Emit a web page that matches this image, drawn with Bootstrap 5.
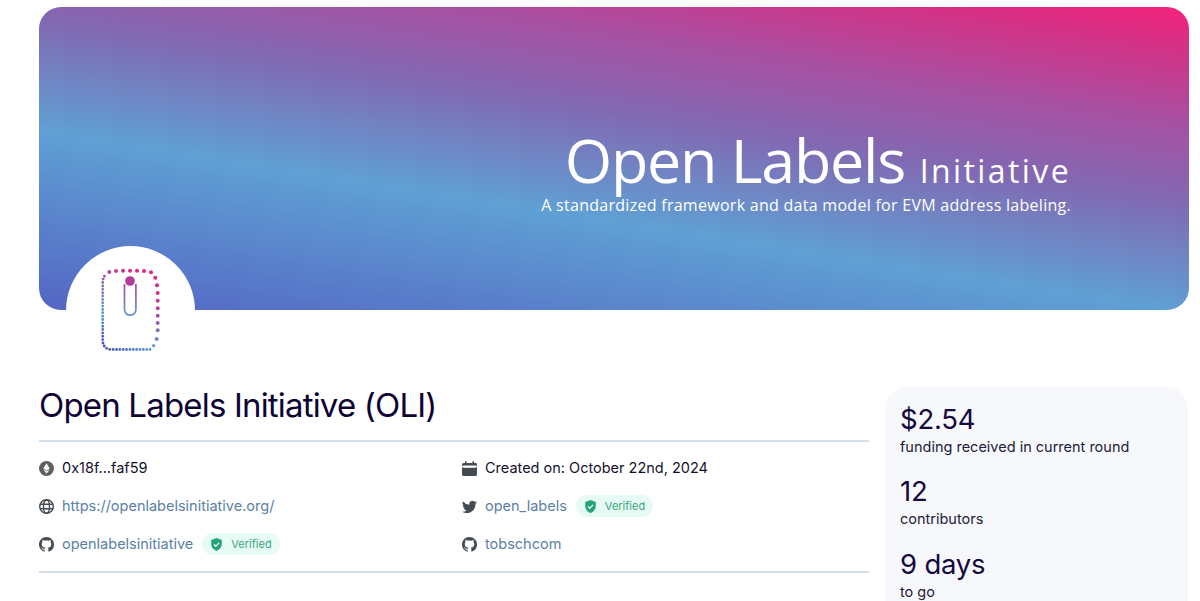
<!DOCTYPE html>
<html lang="en">
<head>
<meta charset="utf-8">
<title>Open Labels Initiative</title>
<link href="https://cdn.jsdelivr.net/npm/bootstrap@5.3.0/dist/css/bootstrap.min.css" rel="stylesheet">
<style>
html,body{height:601px;overflow:hidden;background:#fff}
body{font-family:Inter,"Liberation Sans",sans-serif;color:#0e0333;font-size:14.5px}
.page-wrap{padding:7px 11px 0 39px}
.hero{height:303px;border-radius:22px;background:linear-gradient(9deg,#5465c3 0%,#5fa0d4 37%,#8268b2 60%,#a850a2 76%,#d03488 90%,#f5237c 100%);padding:125px 118px 0 0;color:#fff;text-align:right;position:relative}
.hero-title{font-family:"Open Sans",sans-serif;font-weight:400;font-size:61px;line-height:56px;letter-spacing:-1.25px;margin:0}
.hero-title span{font-size:32px;line-height:1;letter-spacing:2.4px;font-weight:400}
.hero-sub{font-family:"Open Sans",sans-serif;font-size:16px;line-height:20px;letter-spacing:.28px;margin:7px 0 0}
.logo-disc{position:absolute;left:27px;top:239px;width:129px;height:129px;border-radius:50%;background:#fff}
.logo-disc svg{display:block}
.below{margin-top:77px;gap:16px}
.main-col{width:830px;flex:none}
.side-col{width:303px;flex:none;background:#f7f8fb;border-radius:22px 22px 0 0;padding:14.5px 15px 0;height:214px;overflow:hidden}
.proj-title{font-size:33px;font-weight:400;letter-spacing:-.82px;line-height:36px;margin:0 0 17px;height:36px}
.rule{height:2px;background:#d5dfe9;margin:0}
.facts{display:grid;grid-template-columns:423px 1fr;padding:7px 0 8px}
.fact{height:38px;display:flex;align-items:center;gap:8px;color:#14102c}
.fact svg.ico{width:15px;height:15px;flex:none;color:#444b52}
.fact a{color:#5b80a6;text-decoration:none}
.check-tag{display:inline-flex;align-items:center;gap:8px;height:22px;padding:0 8px;border-radius:11px;background:#e6fbf3;color:#3ba57f;font-size:11px;margin-left:1px}
.check-tag svg{width:13px;height:13px}
.stat-num{font-size:27.5px;letter-spacing:-.2px;line-height:35px;color:#15093f}
.stat-lab{font-size:14.5px;line-height:20px;color:#22203a;margin-bottom:17.5px}
</style>
</head>
<body>
<div class="page-wrap">
  <div class="hero">
    <p class="hero-title">Open Labels <span>Initiative</span></p>
    <p class="hero-sub">A standardized framework and data model for EVM address labeling.</p>
    <div class="logo-disc">
      <svg width="129" height="129" viewBox="66 246 129 129" aria-hidden="true">
        <defs>
          <linearGradient id="dg" gradientUnits="userSpaceOnUse" x1="160" y1="272" x2="102" y2="345">
            <stop offset="0" stop-color="#ee1f7c"/><stop offset=".2" stop-color="#d32d88"/><stop offset=".4" stop-color="#a058a2"/><stop offset=".6" stop-color="#6f8fc6"/><stop offset=".72" stop-color="#5a9fd2"/><stop offset="1" stop-color="#4a50bb"/>
          </linearGradient>
          <linearGradient id="cg" gradientUnits="userSpaceOnUse" x1="130" y1="284" x2="130" y2="317">
            <stop offset="0" stop-color="#b2479f"/><stop offset="1" stop-color="#5f9bd4"/>
          </linearGradient>
        </defs>
        <g fill="url(#dg)">
          <circle cx="109.3" cy="272" r="2"/><circle cx="116" cy="271" r="2"/><circle cx="123" cy="270.7" r="2"/><circle cx="130" cy="270.7" r="2"/><circle cx="137" cy="270.7" r="2"/><circle cx="144" cy="271" r="2"/><circle cx="151" cy="272.3" r="2"/><circle cx="155.3" cy="277.7" r="2"/>
          <circle cx="157" cy="285.3" r="2"/><circle cx="157.7" cy="293" r="2"/><circle cx="157.7" cy="300.7" r="2"/><circle cx="157.7" cy="308.3" r="2"/><circle cx="157.7" cy="315.7" r="2"/><circle cx="157.7" cy="323" r="2"/><circle cx="157.7" cy="330.3" r="2"/><circle cx="156.7" cy="339" r="2"/><circle cx="153.7" cy="345.7" r="1.6"/>
        </g>
        <path d="M150 349.5H111C106 349.5 103 346 102.7 341V283C102.7 279 103.5 277 105 275.5" fill="none" stroke="url(#dg)" stroke-width="2.9" stroke-linecap="round" stroke-dasharray="0 3.35"/>
        <path d="M124.5 284V309.5a5.7 5.7 0 0 0 11.4 0V284" fill="none" stroke="url(#cg)" stroke-width="1.7"/>
        <circle cx="130" cy="281" r="4.8" fill="#b43c98"/>
      </svg>
    </div>
  </div>
  <div class="d-flex below">
    <div class="main-col">
      <h1 class="proj-title">Open Labels Initiative (OLI)</h1>
      <div class="rule"></div>
      <div class="facts">
        <div class="fact">
          <svg class="ico" viewBox="0 0 16 16"><circle cx="8" cy="8" r="8" fill="#5f5f60"/><path d="M8 2.3 4.6 8 8 10l3.4-2z" fill="#fff"/><path d="M4.6 8.8 8 13.7l3.4-4.9L8 10.9z" fill="#fff"/></svg>
          <span>0x18f...faf59</span>
        </div>
        <div class="fact">
          <svg class="ico" viewBox="0 0 16 16"><path fill="currentColor" d="M4 0a.8.8 0 0 1 .8.8V2h6.4V.8a.8.8 0 0 1 1.6 0V2h1A2 2 0 0 1 16 4v1H0V4a2 2 0 0 1 2-2h1.2V.8A.8.8 0 0 1 4 0zM0 7h16v7a2 2 0 0 1-2 2H2a2 2 0 0 1-2-2z"/><rect x="2" y="5" width="12" height="2" fill="#fff"/></svg>
          <span>Created on: October 22nd, 2024</span>
        </div>
        <div class="fact">
          <svg class="ico" viewBox="0 0 16 16" fill="none" stroke="currentColor" stroke-width="1.5"><circle cx="8" cy="8" r="7.2"/><ellipse cx="8" cy="8" rx="3.2" ry="7.2"/><path d="M1 5.6h14M1 10.4h14"/></svg>
          <a href="#">https://openlabelsinitiative.org/</a>
        </div>
        <div class="fact">
          <svg class="ico" viewBox="0 0 16 16"><path fill="currentColor" d="M5.026 15c6.038 0 9.341-5.003 9.341-9.334 0-.14 0-.282-.006-.422A6.685 6.685 0 0 0 16 3.542a6.658 6.658 0 0 1-1.889.518 3.301 3.301 0 0 0 1.447-1.817 6.533 6.533 0 0 1-2.087.793A3.286 3.286 0 0 0 7.875 6.03a9.325 9.325 0 0 1-6.767-3.429 3.289 3.289 0 0 0 1.018 4.382A3.323 3.323 0 0 1 .64 6.575v.045a3.288 3.288 0 0 0 2.632 3.218 3.203 3.203 0 0 1-.865.115 3.23 3.23 0 0 1-.614-.057 3.283 3.283 0 0 0 3.067 2.277A6.588 6.588 0 0 1 .78 13.58a6.32 6.32 0 0 1-.78-.045A9.344 9.344 0 0 0 5.026 15z"/></svg>
          <a href="#">open_labels</a>
          <span class="check-tag"><svg viewBox="0 0 16 16"><path fill="#27a37a" d="M8 0 1.5 2.4v5.1c0 3.9 2.7 7 6.5 8.5 3.8-1.5 6.5-4.6 6.5-8.5V2.4z"/><path d="M5 8l2.2 2.2L11.2 6" fill="none" stroke="#e6fbf3" stroke-width="1.6"/></svg>Verified</span>
        </div>
        <div class="fact">
          <svg class="ico" viewBox="0 0 16 16"><path fill="currentColor" d="M8 0C3.58 0 0 3.58 0 8c0 3.54 2.29 6.53 5.47 7.59.4.07.55-.17.55-.38 0-.19-.01-.82-.01-1.49-2.01.37-2.53-.49-2.69-.94-.09-.23-.48-.94-.82-1.13-.28-.15-.68-.52-.01-.53.63-.01 1.08.58 1.23.82.72 1.21 1.87.87 2.33.66.07-.52.28-.87.51-1.07-1.78-.2-3.64-.89-3.64-3.95 0-.87.31-1.59.82-2.15-.08-.2-.36-1.02.08-2.12 0 0 .67-.21 2.2.82.64-.18 1.32-.27 2-.27.68 0 1.36.09 2 .27 1.53-1.04 2.2-.82 2.2-.82.44 1.1.16 1.92.08 2.12.51.56.82 1.27.82 2.15 0 3.07-1.87 3.75-3.65 3.95.29.25.54.73.54 1.48 0 1.07-.01 1.93-.01 2.2 0 .21.15.46.55.38A8.012 8.012 0 0 0 16 8c0-4.42-3.58-8-8-8z"/></svg>
          <a href="#">openlabelsinitiative</a>
          <span class="check-tag"><svg viewBox="0 0 16 16"><path fill="#27a37a" d="M8 0 1.5 2.4v5.1c0 3.9 2.7 7 6.5 8.5 3.8-1.5 6.5-4.6 6.5-8.5V2.4z"/><path d="M5 8l2.2 2.2L11.2 6" fill="none" stroke="#e6fbf3" stroke-width="1.6"/></svg>Verified</span>
        </div>
        <div class="fact">
          <svg class="ico" viewBox="0 0 16 16"><path fill="currentColor" d="M8 0C3.58 0 0 3.58 0 8c0 3.54 2.29 6.53 5.47 7.59.4.07.55-.17.55-.38 0-.19-.01-.82-.01-1.49-2.01.37-2.53-.49-2.69-.94-.09-.23-.48-.94-.82-1.13-.28-.15-.68-.52-.01-.53.63-.01 1.08.58 1.23.82.72 1.21 1.87.87 2.33.66.07-.52.28-.87.51-1.07-1.78-.2-3.64-.89-3.64-3.95 0-.87.31-1.59.82-2.15-.08-.2-.36-1.02.08-2.12 0 0 .67-.21 2.2.82.64-.18 1.32-.27 2-.27.68 0 1.36.09 2 .27 1.53-1.04 2.2-.82 2.2-.82.44 1.1.16 1.92.08 2.12.51.56.82 1.27.82 2.15 0 3.07-1.87 3.75-3.65 3.95.29.25.54.73.54 1.48 0 1.07-.01 1.93-.01 2.2 0 .21.15.46.55.38A8.012 8.012 0 0 0 16 8c0-4.42-3.58-8-8-8z"/></svg>
          <a href="#">tobschcom</a>
        </div>
      </div>
      <div class="rule"></div>
    </div>
    <aside class="side-col">
      <div class="stat-num">$2.54</div>
      <div class="stat-lab">funding received in current round</div>
      <div class="stat-num">12</div>
      <div class="stat-lab">contributors</div>
      <div class="stat-num">9 days</div>
      <div class="stat-lab">to go</div>
    </aside>
  </div>
</div>
</body>
</html>
